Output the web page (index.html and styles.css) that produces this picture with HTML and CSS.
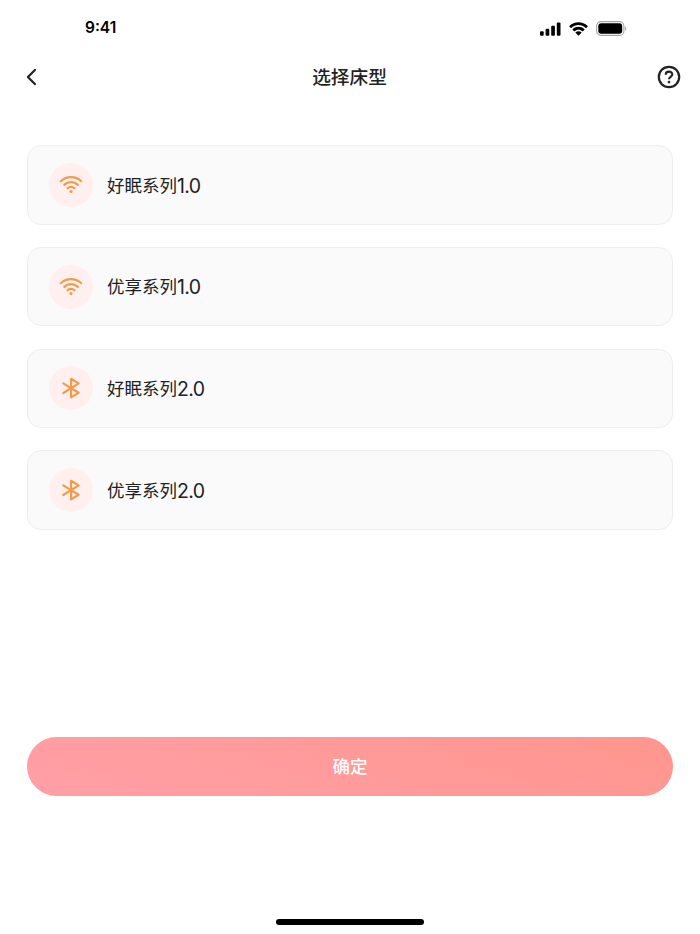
FILE: index.html
```html
<!DOCTYPE html>
<html lang="zh-CN">
<head>
  <meta charset="UTF-8">
  <title>选择床型</title>
  <meta name="viewport" content="width=device-width, initial-scale=1.0">
  <link rel="stylesheet" href="styles.css">
</head>
<body>
  <!-- icons used more than once -->
  <svg class="sprite" width="0" height="0">
    <symbol id="icon-wifi" viewBox="0 0 24 20">
      <path d="M1.8 6.200C7.500.8 16.500.8 22.200 6.200M5.300 9.900C9 6.200 15 6.200 18.700 9.900M8.600 13.300C10.500 11.400 13.500 11.400 15.400 13.300" fill="none" stroke="currentColor" stroke-width="2.200" stroke-linecap="round"/>
      <circle cx="12" cy="16.500" r="1.600" fill="currentColor"/>
    </symbol>
    <symbol id="icon-bluetooth" viewBox="0 0 24 24">
      <path d="M4.300 7.400L19.600 16.800L12.100 21.400V2.800L19.600 7.400L4.300 17" fill="none" stroke="currentColor" stroke-width="2.200" stroke-linecap="round" stroke-linejoin="round"/>
    </symbol>
  </svg>

  <div class="page">
    <div class="status-bar">
      <span class="time">9:41</span>
      <div class="status-icons">
        <svg width="21" height="14" viewBox="0 0 21 14">
          <rect x="0" y="9.300" width="3.700" height="4.500" rx="1"/>
          <rect x="5.600" y="6.800" width="3.700" height="7" rx="1"/>
          <rect x="11.200" y="3.700" width="3.700" height="10.100" rx="1"/>
          <rect x="16.800" y="0.400" width="3.700" height="13.400" rx="1"/>
        </svg>
        <svg width="19" height="14" viewBox="0 0 17 12.300">
          <path d="M8.500 2.600c2.400 0 4.700.9 6.500 2.600.1.100.3.100.4 0l1.300-1.300c.1-.1.100-.3 0-.5C12.100-1.100 4.900-1.100.300 3.400c-.1.200-.1.400 0 .5l1.300 1.300c.1.100.3.100.4 0 1.800-1.700 4.100-2.600 6.500-2.600zM8.500 6.800c1.300 0 2.600.5 3.500 1.400.2.100.4.100.5 0l1.300-1.300c.1-.1.100-.4 0-.5-3-2.900-7.600-2.900-10.600 0-.1.100-.1.400 0 .5l1.300 1.300c.1.100.3.100.5 0 .9-.9 2.200-1.400 3.500-1.400zM11.100 9.600c.1-.1.100-.3 0-.5-1.500-1.300-3.700-1.300-5.200 0-.1.200-.1.400 0 .5l2.300 2.300c.2.200.4.200.6 0z"/>
        </svg>
        <svg width="31" height="15" viewBox="0 0 31 15">
          <rect x="0.600" y="0.600" width="27.300" height="13.800" rx="4.500" fill="none" stroke="#a6a6a6" stroke-width="1.100"/>
          <rect x="2.300" y="2.300" width="23.900" height="10.400" rx="2.900"/>
          <path d="M29.100 5.200v4.600c1.600-.7 1.600-3.900 0-4.600z" fill="#a6a6a6"/>
        </svg>
      </div>
    </div>

    <div class="nav-bar">
      <svg class="back" width="12" height="18" viewBox="0 0 12 18">
        <path d="M9.900 1.900L2.900 9L9.900 16.100" fill="none" stroke="currentColor" stroke-width="2.200" stroke-linecap="round" stroke-linejoin="round"/>
      </svg>
      <h1>选择床型</h1>
      <svg class="help" width="24" height="24" viewBox="0 0 24 24">
        <circle cx="12" cy="12" r="10.200" fill="none" stroke="currentColor" stroke-width="2.200"/>
        <path d="M8.700 9.700C8.700 5.600 15.300 5.600 15.300 9.600C15.300 11.700 12 11.900 12 14.200" fill="none" stroke="currentColor" stroke-width="2.100"/>
        <circle cx="12" cy="17.100" r="1.300" fill="currentColor"/>
      </svg>
    </div>

    <div class="bed-list">
      <div class="bed">
        <span class="bed-icon"><svg width="24" height="20"><use href="#icon-wifi"/></svg></span>
        <span class="bed-name">好眠系列<span class="version">1.0</span></span>
      </div>
      <div class="bed">
        <span class="bed-icon"><svg width="24" height="20"><use href="#icon-wifi"/></svg></span>
        <span class="bed-name">优享系列<span class="version">1.0</span></span>
      </div>
      <div class="bed">
        <span class="bed-icon"><svg width="24" height="24"><use href="#icon-bluetooth"/></svg></span>
        <span class="bed-name">好眠系列<span class="version">2.0</span></span>
      </div>
      <div class="bed">
        <span class="bed-icon"><svg width="24" height="24"><use href="#icon-bluetooth"/></svg></span>
        <span class="bed-name">优享系列<span class="version">2.0</span></span>
      </div>
    </div>

    <button class="confirm" type="button">确定</button>
    <div class="home-indicator"></div>
  </div>
</body>
</html>
```

FILE: styles.css
```css
* {
  box-sizing: border-box;
}

body {
  margin: 0;
  background: #fff;
  color: #222;
  font-family: "Noto Sans CJK SC", sans-serif;
}

.sprite {
  display: block;
}

.page {
  height: 934px;
  display: flex;
  flex-direction: column;
  overflow: hidden;
}

.status-bar {
  height: 54px;
  padding: 0 73px 0 85px;
  display: flex;
  justify-content: space-between;
  align-items: center;
  color: #000;
}

.time {
  padding-top: 2px;
  font: 600 15.5px/20px Inter, sans-serif;
}

.status-icons {
  display: flex;
  align-items: center;
  gap: 8px;
  padding-top: 3px;
}

.nav-bar {
  height: 45px;
  padding: 0 19px 0 25px;
  display: grid;
  grid-template-columns: 24px 1fr 24px;
  align-items: center;
}

.nav-bar h1 {
  margin: 0;
  padding: 0 7px 2px 0;
  font-size: 18.7px;
  line-height: 28px;
  font-weight: 500;
  text-align: center;
}

.bed-list {
  margin: 46.300px 27px 0;
  display: flex;
  flex-direction: column;
  gap: 22.200px;
}

.bed {
  height: 79.500px;
  padding-left: 21px;
  display: flex;
  align-items: center;
  gap: 14px;
  background: #fafafa;
  border: 1px solid #eee;
  border-radius: 14px;
}

.bed-icon {
  width: 44px;
  height: 44px;
  display: flex;
  align-items: center;
  justify-content: center;
  border-radius: 50%;
  background: #fff0ef;
  color: #f29b4b;
}

.bed-name {
  font-size: 17.5px;
  line-height: 28px;
}

.version {
  font-family: Inter, sans-serif;
  font-size: 19.5px;
  letter-spacing: -0.6px;
  vertical-align: -1px;
}

.confirm {
  height: 58.500px;
  margin: 207.200px 27px 0;
  padding: 0 0 2px;
  border: 0;
  border-radius: 30px;
  background: linear-gradient(20deg, #ff9fa7, #ff968e);
  color: #fff;
  font-family: inherit;
  font-size: 17.5px;
  font-weight: 500;
}

.home-indicator {
  width: 148px;
  height: 6px;
  margin: auto auto 9px;
  border-radius: 3px;
  background: #000;
}
```
